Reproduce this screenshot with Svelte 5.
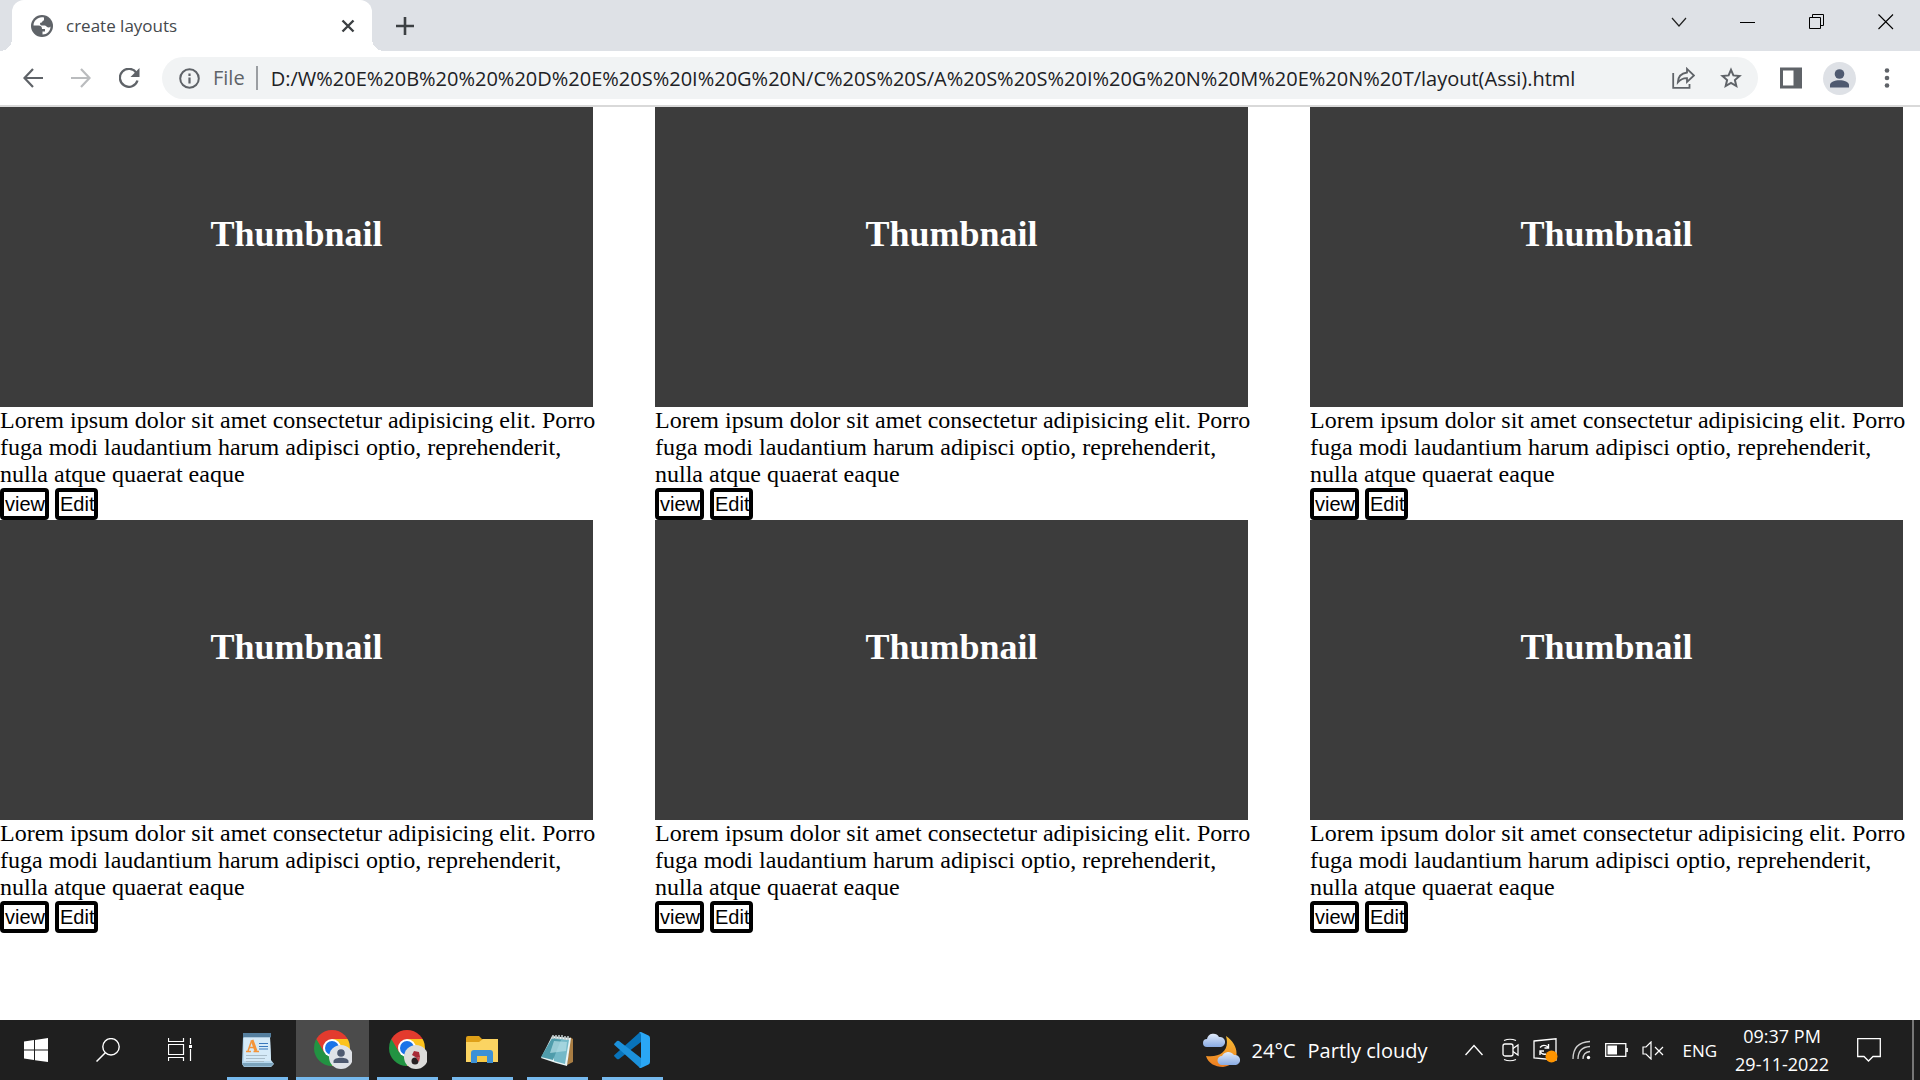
<script>
  const cards = [1, 2, 3, 4, 5, 6];
  const url = 'D:/W%20E%20B%20%20%20D%20E%20S%20I%20G%20N/C%20S%20S/A%20S%20S%20I%20G%20N%20M%20E%20N%20T/layout(Assi).html';
</script>

{#snippet chrome(id)}
  <defs><clipPath id={id}><circle cx="18" cy="18" r="18" /></clipPath></defs>
  <g clip-path="url(#{id})">
    <path fill="#e33b2e" d="M0 0H36V9H18L10 22.500L0 8Z" />
    <path fill="#fcc31e" d="M18 9H36V36H16L26 22.500Z" />
    <path fill="#229342" d="M2.400 9L10.200 22.500L18 27L25.800 22.500L18 36H0V9Z" />
  </g>
  <circle cx="18" cy="18" r="9" fill="#fff" />
  <circle cx="18" cy="18" r="7" fill="#1a73e8" />
{/snippet}

<div class="screen">
  <header>
    <div class="tabs">
      <div class="tab">
        <svg class="fav" width="22" height="22" viewBox="0 0 22 22"><circle cx="11" cy="11" r="11" fill="#5f6368" /><path fill="#fff" d="M13 2.500C8 1 2.500 5 2.500 10.500H7.500C10 10.500 11 12 11 14H14V16.500H11.500V19.500C16 19.500 19.500 16 19.500 11.500C18.500 13 16.500 12.500 15.500 11.500C14.500 10.200 13 10.800 10.500 10.500C8.500 10 8.500 7.500 10.500 7.500C11.500 7.500 11 5.500 13 5.500Z" /></svg>
        <span class="title">create layouts</span>
        <button aria-label="Close tab"><svg width="14" height="14" viewBox="0 0 14 14"><path d="M1.500 1.500L12.500 12.500M12.500 1.500L1.500 12.500" stroke="#3c4043" stroke-width="2.400" /></svg></button>
      </div>
      <button class="plus" aria-label="New tab"><svg width="18" height="18" viewBox="0 0 18 18"><path d="M9 0V18M0 9H18" stroke="#3c4043" stroke-width="2.600" /></svg></button>
      <div class="caption">
        <button aria-label="Search tabs"><svg width="16" height="16" viewBox="0 0 16 16"><path d="M1 4L8 12L15 4" fill="none" stroke="#222" stroke-width="1.200" /></svg></button>
        <button aria-label="Minimize"><svg width="16" height="16" viewBox="0 0 16 16"><path d="M0 8.500H15" stroke="#000" /></svg></button>
        <button aria-label="Restore"><svg width="16" height="16" viewBox="0 0 16 16"><path d="M.5 3.500H11.500V14.500H.5ZM3.500 3.500V.5H14.500V11.500H11.500" fill="none" stroke="#000" /></svg></button>
        <button aria-label="Close"><svg width="16" height="16" viewBox="0 0 16 16"><path d="M.5 .5L15 15M15 .5L.5 15" stroke="#000" stroke-width="1.100" /></svg></button>
      </div>
    </div>
    <div class="toolbar">
      <button class="nav" aria-label="Back"><svg width="20" height="20" viewBox="0 0 20 20"><path d="M20 10H1.500M10 1L1.500 10L10 19" fill="none" stroke="#5f6368" stroke-width="2.200" /></svg></button>
      <button class="nav" aria-label="Forward"><svg width="20" height="20" viewBox="0 0 20 20"><path d="M0 10H18.500M10 1L18.500 10L10 19" fill="none" stroke="#babcbe" stroke-width="2.200" /></svg></button>
      <button class="nav" aria-label="Reload"><svg width="21" height="20" viewBox="0 0 21 20"><path d="M17.500 5A9 9 0 1 0 18.500 12.500" fill="none" stroke="#5f6368" stroke-width="2.300" /><path d="M20.500 0V9H11.500Z" fill="#5f6368" /></svg></button>
      <div class="omni">
        <svg width="21" height="21" viewBox="0 0 21 21"><circle cx="10.500" cy="10.500" r="9.300" fill="none" stroke="#5f6368" stroke-width="2" /><path d="M10.500 9.500V15.500M10.500 5.500V8" stroke="#5f6368" stroke-width="2.200" /></svg>
        <span class="file">File</span>
        <input aria-label="Address" value={url} />
        <button aria-label="Share"><svg width="23" height="22" viewBox="0 0 23 22"><path d="M1.200 6V20.800H17.500V17" fill="none" stroke="#5f6368" stroke-width="1.800" /><path d="M15 1.800L22 8.500L15 15V11.200C11 11 8.500 12.500 5.800 15.500C6 10 9 6.300 15 5.500Z" fill="none" stroke="#5f6368" stroke-width="1.800" /></svg></button>
        <button aria-label="Bookmark"><svg width="22" height="22" viewBox="0 0 22 22"><path d="M11 2.800L13.400 8.400L19.500 9L14.900 13L16.300 19L11 15.800L5.700 19L7.100 13L2.500 9L8.600 8.400Z" fill="none" stroke="#5f6368" stroke-width="2" /></svg></button>
      </div>
      <button class="panel" aria-label="Side panel"><svg width="22" height="22" viewBox="0 0 22 22"><path fill="#5f6368" fill-rule="evenodd" d="M0 .5H22V21.500H0ZM3 3.500V18.500H13.500V3.500Z" /></svg></button>
      <button class="avatar" aria-label="Profile"><svg width="33" height="33" viewBox="0 0 33 33"><circle cx="16.500" cy="16.500" r="16.500" fill="#dee1e6" /><circle cx="16.500" cy="12" r="4.800" fill="#4f5a70" /><path d="M7 25.500V23C7 16.500 26 16.500 26 23V25.500Z" fill="#4f5a70" /></svg></button>
      <button class="dots" aria-label="Menu"><svg width="6" height="22" viewBox="0 0 6 22"><g fill="#5f6368"><circle cx="3" cy="3.500" r="2.300" /><circle cx="3" cy="11" r="2.300" /><circle cx="3" cy="18.500" r="2.300" /></g></svg></button>
    </div>
  </header>

  <main>
    {#each cards as card (card)}
      <article>
        <div class="thumb"><h2>Thumbnail</h2></div>
        <p>Lorem ipsum dolor sit amet consectetur adipisicing elit. Porro fuga modi laudantium harum adipisci optio, reprehenderit, nulla atque quaerat eaque</p>
        <div class="actions"><button>view</button><button>Edit</button></div>
      </article>
    {/each}
  </main>

  <footer>
    <button class="sys" aria-label="Start"><svg width="24" height="24" viewBox="0 0 24 24"><path fill="#fff" d="M0 3.500L10 2V11.500H0ZM11 1.900L24 0V11.500H11ZM0 12.500H10V22L0 20.500ZM11 12.500H24V24L11 22.200Z" /></svg></button>
    <button class="sys" aria-label="Search"><svg width="24" height="24" viewBox="0 0 24 24"><circle cx="15" cy="8.800" r="8.200" fill="none" stroke="#fff" stroke-width="1.400" /><path d="M9.300 14.700L.5 23.500" stroke="#fff" stroke-width="1.500" /></svg></button>
    <button class="sys" aria-label="Task view"><svg width="24" height="24" viewBox="0 0 24 24"><path d="M.5 0V3.500H15.500V0M.5 6.500H15.500V16.500H.5ZM.5 23V19.500H15.500V23M22.500 0V6M22.500 11V23" fill="none" stroke="#fff" stroke-width="1.200" /><path d="M21 7H24V10H21Z" fill="#fff" /></svg></button>
    <div class="apps">
      <button aria-label="WordPad"><svg width="36" height="36" viewBox="0 0 36 36"><path d="M3 5H30L31 28L34 32L31 35H4L2 32Z" fill="#b7d8ee" /><path d="M3 1H31V5.500H3Z" fill="#557f9f" /><path d="M4 5.500H30L31 29H4Z" fill="#d5eaf8" /><path d="M2 31H34L31 34.500H4Z" fill="#7ca4bd" /><path d="M8 19L11.500 9" stroke="#f49439" stroke-width="1.500" /><path d="M12 8L16 19" stroke="#f49439" stroke-width="3" /><path d="M9 15.500H14M6 19.500H11M13.500 19.500H19" stroke="#f49439" stroke-width="1.500" /><path d="M19 11.500H28M19 14.500H28M19 17H28" stroke="#3978bd" stroke-width="1.200" /><path d="M6 23.500H27M6 26.500H25M6 29.500H24" stroke="#a9bdca" stroke-width="1" /></svg></button>
      <button class="active" aria-label="Chrome"><svg width="38" height="40" viewBox="0 0 38 40">{@render chrome('profile-a')}<circle cx="27" cy="27" r="12" fill="#dfe2e7" /><circle cx="27" cy="23" r="3.800" fill="#4f5a70" /><path d="M19.500 33V31C20 26.500 34 26.500 34.500 31V33Z" fill="#4f5a70" /></svg></button>
      <button aria-label="Chrome second profile"><svg width="38" height="40" viewBox="0 0 38 40">{@render chrome('profile-b')}<circle cx="27" cy="27" r="12" fill="#dcdcda" /><path d="M25 21L30 22L31 27L28 28L23 25Z" fill="#a82b36" /><circle cx="26" cy="31" r="3.500" fill="#272022" /><path d="M27 28L31 27L30 32Z" fill="#c0434b" /></svg></button>
      <button aria-label="File Explorer"><svg width="33" height="28" viewBox="0 0 33 28"><path d="M0 2Q0 0 2 0H13L16 3H32V8H0Z" fill="#dfa018" /><path d="M0 6H13L17 3H32V26H0Z" fill="#fbd462" /><path d="M5 27V17Q5 14 8 14H24Q27 14 27 17V27H21V20H11V27Z" fill="#3d91d6" /><path d="M11 20H21V26H11Z" fill="#f7c945" /></svg></button>
      <button aria-label="Notepad"><svg width="36" height="34" viewBox="0 0 36 34"><path d="M30 4L33 6V29L27 32Z" fill="#a97d43" /><path d="M12 3L31 5L27 33L16 30L1 25Z" fill="#eaf5f5" /><path d="M13 5L29 7L25 31L14 28Z" fill="#74b9c8" /><path d="M12 5L1 24L13 27L21 7Z" fill="#4f9cab" /><path d="M14 8L27 9L26 18L10 20Z" fill="#b8e0e7" opacity=".7" /><path d="M13 2V6M16 2V6M19 2V6M22 2V6M25 3V7M28 3V7" stroke="#bcc6c8" stroke-width="1.600" /></svg></button>
      <button aria-label="Visual Studio Code"><svg width="38" height="36" viewBox="0 0 38 36"><path d="M0 24L3 27Q4 27.500 5 27L27 10V0Q26 0 25 1L1 22.500Q0 23.300 0 24Z" fill="#0873ba" /><path d="M0 12L3 9Q4 8.500 5 9L27 26V36Q26 36 25 35L1 13.500Q0 12.700 0 12Z" fill="#1c91db" /><path d="M27 0L34.500 3.500Q36 4.200 36 6V30Q36 31.800 34.500 32.500L27 36Q25.500 35.800 25 35Q27 35.500 27 33V3Q27 .5 25 1Q26 0 27 0Z" fill="#2aa7f5" /></svg></button>
    </div>
    <div class="tray">
      <button class="weather"><svg width="37" height="34" viewBox="0 0 37 34"><defs><linearGradient id="moon" x2="0" y2="1"><stop stop-color="#f7bd35" /><stop offset="1" stop-color="#ed7c20" /></linearGradient><linearGradient id="cloud" x2="0" y2="1"><stop stop-color="#e1ebfb" /><stop offset="1" stop-color="#89abe3" /></linearGradient></defs><path d="M23 3C37 12 38 31 20 34C12 34 5 30 3 23C18 25 27 17 23 3Z" fill="url(#moon)" /><path d="M4 14A4 4 0 0 1 4 6A6.500 6.500 0 0 1 16 4A5 5 0 0 1 18 14Z" fill="url(#cloud)" /><path d="M19 32A4.500 4.500 0 0 1 19 23A7 7 0 0 1 31 22A5 5 0 0 1 33 32Z" fill="url(#cloud)" /></svg><span>24°C</span><span>Partly cloudy</span></button>
      <button class="more" aria-label="Hidden icons"><svg width="18" height="12" viewBox="0 0 18 12"><path d="M.5 11L9 1.500L17.500 11" fill="none" stroke="#fff" stroke-width="1.400" /></svg></button>
      <button aria-label="Meet now"><svg width="17" height="24" viewBox="0 0 17 24"><rect x="1" y="6" width="10" height="12" rx="2" fill="none" stroke="#fff" stroke-width="1.300" /><path d="M11 10.500L16 7V17L11 13.500M2 2.500Q8 0 14 2.500M2 21.500Q8 24 14 21.500" fill="none" stroke="#fff" stroke-width="1.200" /></svg></button>
      <button aria-label="Update"><svg width="25" height="25" viewBox="0 0 25 25"><path d="M1 3L23 .8V22L1 20Z" fill="none" stroke="#fff" stroke-width="1.300" /><path d="M7 9.500Q10.500 5.500 15 9M15.500 6V10H11.500M7 17V13H11M7 13.500Q9 17 13 16" fill="none" stroke="#fff" stroke-width="1.400" /><circle cx="18.500" cy="18.500" r="6" fill="#ff9500" /></svg></button>
      <button aria-label="Network"><svg width="19" height="20" viewBox="0 0 19 20"><path d="M1 19C1 8 7 2 18 1.500M6 19C6 11 10 7 18 6.500M11 19C11 14 13 12 18 11.500" fill="none" stroke="#d0d0d0" stroke-width="1.300" /><circle cx="16.500" cy="17.500" r="1.700" fill="#fff" /></svg></button>
      <button aria-label="Battery"><svg width="23" height="14" viewBox="0 0 23 14"><path d="M.7 .7H20.800V13.300H.7ZM22.200 5V9" fill="none" stroke="#fff" stroke-width="1.300" /><path d="M2.500 2.500H12V11.500H2.500Z" fill="#fff" /></svg></button>
      <button aria-label="Volume"><svg width="22" height="19" viewBox="0 0 22 19"><path d="M1 6H4L9 1V18L4 13H1ZM13 6L21 14M21 6L13 14" fill="none" stroke="#fff" stroke-width="1.200" /></svg></button>
      <button class="lang">ENG</button>
      <button class="clock"><time>09:37 PM</time><span>29-11-2022</span></button>
      <button aria-label="Notifications"><svg width="24" height="24" viewBox="0 0 24 24"><path d="M.7 .7H23.300V18.500H16L11.500 23L7 18.500H.7Z" fill="none" stroke="#fff" stroke-width="1.300" /></svg></button>
    </div>
  </footer>
</div>

<style>
  :global(body) { background: #fff; }
  button { border: 0; padding: 0; background: none; font: inherit; color: inherit; display: flex; align-items: center; justify-content: center; flex-shrink: 0; }
  svg { display: block; flex-shrink: 0; }
  .screen { min-height: 100vh; display: flex; flex-direction: column; }
  header { font-family: "Open Sans", "Noto Sans", sans-serif; border-bottom: 2px solid #d9d9d9; }
  .tabs { display: flex; height: 51px; background: #dee1e6; }
  .tab { position: relative; box-sizing: border-box; width: 360px; margin-left: 12px; padding: 0 17px 0 19px; display: flex; align-items: center; background: #fff; border-radius: 12px 12px 0 0; }
  .tab::before, .tab::after { content: ""; position: absolute; bottom: 0; width: 12px; height: 12px; }
  .tab::before { left: -12px; background: radial-gradient(circle at 0 0, #dee1e6 12px, #fff 12px); }
  .tab::after { right: -12px; background: radial-gradient(circle at 100% 0, #dee1e6 12px, #fff 12px); }
  .title { flex: 1; margin-left: 13px; font-size: 17px; color: #45494d; }
  .plus { margin-left: 24px; width: 18px; }
  .caption { margin-left: auto; display: flex; height: 44px; }
  .caption button { width: 69px; }
  .toolbar { display: flex; align-items: center; height: 54px; padding: 0 30px 0 9px; }
  .nav { width: 48px; height: 42px; }
  .omni { flex: 1; display: flex; align-items: center; min-width: 0; box-sizing: border-box; height: 42px; margin-left: 9px; padding: 0 16px 0 17px; gap: 13px; background: #f1f3f4; border-radius: 21px; font-size: 20px; }
  .file { color: #5f6368; border-right: 2px solid #9b9ea2; padding-right: 11px; line-height: 24px; }
  .omni input { flex: 1; min-width: 0; border: 0; padding: 0; background: none; font: inherit; color: #202124; outline: none; }
  .omni button + button { margin-left: 12px; }
  .panel { margin-left: 22px; }
  .avatar { margin-left: 21px; }
  .dots { margin-left: 28px; }

  main { flex: 1; display: grid; grid-template-columns: repeat(3, 1fr); column-gap: 55px; align-content: start; padding-right: 10px; font-family: "Liberation Serif", serif; font-size: 24px; line-height: 27px; color: #000; }
  .thumb { height: 300px; box-sizing: border-box; padding-top: 107px; margin-right: 7px; background: #3c3c3c; color: #fff; text-align: center; }
  h2 { margin: 0; font-size: 36px; line-height: 41px; }
  p { margin: 0; }
  .actions { display: flex; gap: 6px; }
  .actions button { height: 32px; padding-left: 1px; border: 4px solid #000; border-radius: 4px; background: #fff; font-family: "Liberation Sans", sans-serif; font-size: 20px; }

  footer { display: flex; height: 60px; background: #1f1f1f; color: #fff; font-family: "Open Sans", "Noto Sans", sans-serif; }
  .sys { width: 72px; }
  .apps { display: flex; gap: 14px; margin-left: 11px; }
  .apps button { width: 61px; box-sizing: border-box; border-bottom: 3px solid #76b9ed; padding-top: 3px; }
  .apps .active { width: 73px; margin: 0 -6px; background: #4b4b4b; }
  .tray { display: flex; align-items: center; gap: 14px; margin-left: auto; margin-right: 6px; padding-right: 31px; border-right: 2px solid #777; }
  .weather { font-size: 20px; gap: 12px; margin-right: 24px; }
  .more { margin-right: 5px; }
  .lang { font-size: 17px; margin-left: 4px; }
  .clock { flex-direction: column; font-size: 18px; line-height: 28px; margin: 0 14px 0 4px; }
</style>
